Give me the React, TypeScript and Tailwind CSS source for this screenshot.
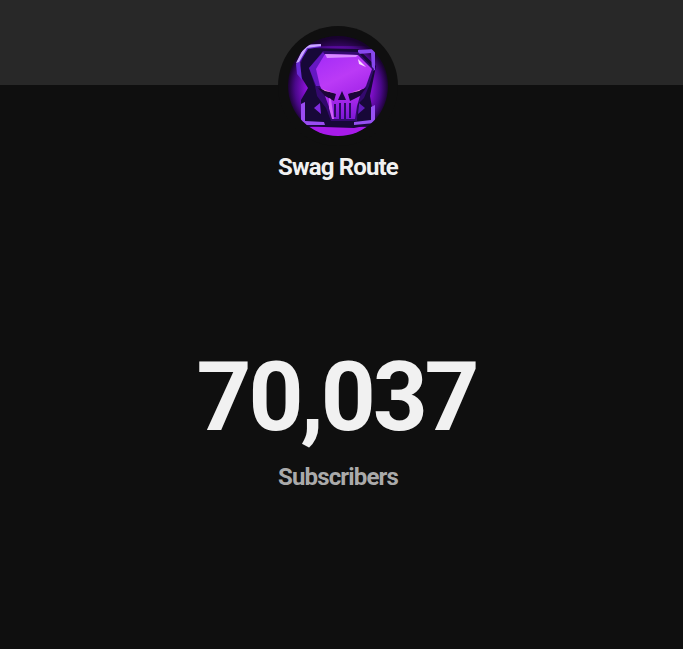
const roboto = "font-['Roboto',sans-serif]";

function SkullLogo() {
  return (
    <svg viewBox="0 0 100 100" className="block w-full h-full">
      <defs>
        <radialGradient id="bg" cx="50%" cy="52%" r="50%">
          <stop offset="0%" stopColor="#c81ff5" />
          <stop offset="62%" stopColor="#8f12dc" />
          <stop offset="86%" stopColor="#4a088a" />
          <stop offset="100%" stopColor="#1a0332" />
        </radialGradient>
        <linearGradient id="cranium" x1="0.1" y1="0" x2="0.8" y2="1">
          <stop offset="0%" stopColor="#a42cf8" />
          <stop offset="55%" stopColor="#bb3af6" />
          <stop offset="100%" stopColor="#a426ea" />
        </linearGradient>
        <linearGradient id="jaw" x1="0" y1="0" x2="0" y2="1">
          <stop offset="0%" stopColor="#b02cf0" />
          <stop offset="100%" stopColor="#7d18d6" />
        </linearGradient>
        <clipPath id="circle">
          <circle cx="50" cy="50" r="50" />
        </clipPath>
      </defs>
      <g clipPath="url(#circle)">
        <rect width="100" height="100" fill="url(#bg)" />
        <path d="M0 0h100v10H0z" fill="#160229" opacity="0.5" />
        <path d="M14 91H86L78 100H22Z" fill="#a81bea" />
        {/* dark backing */}
        <path d="M10 36L18 12L70 13L88 30L82 60L87 88L66 92L36 91L13 89L13 64L20 52Z" fill="#170838" />
        {/* corner brackets */}
        <path d="M8 28L17 9L33 8L33 11L20 13L12 26L14 44L9 38Z" fill="#6a2bd6" />
        <path d="M17 9L33 8L33 10L19 12L11 26L8 27Z" fill="#c9a6ff" />
        <path d="M70 14L87 13L87 34L84 35L83 17L70 18Z" fill="#8748ee" />
        <path d="M13 68L17 66L17 85L36 86L37 89L13 89Z" fill="#9a4cf2" />
        <path d="M83 71L87 69L87 87L66 89L66 86L83 84Z" fill="#9650f2" />
        <path d="M26 72L32 67L33 78Z" fill="#7f2ade" />
        <path d="M77 72L71 67L70 78Z" fill="#5f1cb8" />
        {/* skull side faces */}
        <path d="M21 32L35 15L70 16L86 33L81 50L76 62L70 68L69 85L43 85L38 72L29 60L27 50Z" fill="#34096f" />
        <path d="M21 32L35 16L38 20L29 33L33 50L28 50Z" fill="#6518c2" />
        {/* skull front */}
        <path d="M28 33L37 18L70 19L84 33L78 50L72 58L36 58L32 50Z" fill="url(#cranium)" />
        <path d="M37 18L70 19L68 21L39 22Z" fill="#d98bff" />
        <path d="M70 23L78 31L71 28Z" fill="#f8d8ff" />
        {/* jaw */}
        <path d="M37 60L46 58L64 58L72 60L69 70L67 83L45 83L41 71Z" fill="url(#jaw)" />
        {/* eyes */}
        <path d="M30 52L48 58L46 65L37 60Z" fill="#1c0538" />
        <path d="M34 53L46 57L37 55Z" fill="#ff8cee" />
        <path d="M78 52L60 58L62 65L72 60Z" fill="#1c0538" />
        <path d="M74 53L62 57L71 55Z" fill="#ff8cee" />
        {/* nose */}
        <path d="M54 55L58 64H50Z" fill="#1d0540" />
        {/* teeth gaps */}
        <path d="M46 68H48V81H46ZM51 67H53V83H51ZM56 67H58V83H56ZM61 67H63V82H61Z" fill="#2c0a63" />
        <path d="M41 62L43 63L46 83H44L41 72Z" fill="#d060fa" />
      </g>
    </svg>
  );
}

export default function App() {
  return (
    <div className={`min-h-[649px] bg-[#0f0f0f] ${roboto}`}>
      <div className="w-full h-[85px] bg-[#282828]" />
      <div className="flex flex-col items-center pr-[7px]">
        <div className="-mt-[59px] w-[120px] h-[120px] rounded-full bg-[#0f0f0f] p-[10px]">
          <SkullLogo />
        </div>
        <h1 className="mt-[5px] text-[24px] leading-[32px] font-bold tracking-[-0.85px] text-[#f1f1f1]">Swag Route</h1>
        <div className="mt-[158px] pr-[3px] text-[96px] leading-[112px] font-bold tracking-[-3.2px] text-[#f1f1f1]">70,037</div>
        <div className="mt-[8px] text-[24px] leading-[32px] font-bold tracking-[-0.85px] text-[#aaaaaa]">Subscribers</div>
      </div>
    </div>
  );
}
